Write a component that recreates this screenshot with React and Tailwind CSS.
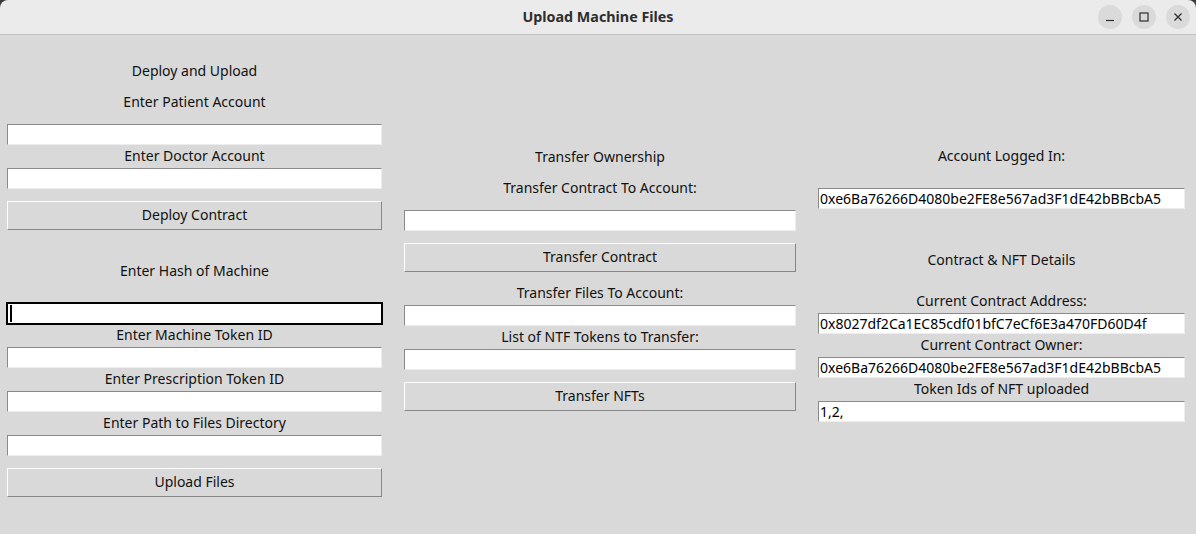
import React from "react";

const font = { fontFamily: '"Noto Sans", "DejaVu Sans", sans-serif' };

function Label({ children, className = "" }) {
  return (
    <div className={`h-[20px] text-center text-[14px] leading-[20px] text-[#111] ${className}`}>
      {children}
    </div>
  );
}

function Entry({ value = "", className = "" }) {
  return (
    <div
      className={`h-[21px] border border-t-[#8a8a8a] border-l-[#8a8a8a] border-r-[#ededed] border-b-[#ededed] bg-white px-[1px] text-[14px] leading-[19px] text-black whitespace-nowrap overflow-hidden ${className}`}
    >
      {value}
    </div>
  );
}

function FocusEntry({ className = "" }) {
  return (
    <div className={`-mx-px h-[23px] border-2 border-black bg-white p-[1px] ${className}`}>
      <div className="ml-[1px] h-full w-[2px] bg-black" />
    </div>
  );
}

function Button({ children, className = "" }) {
  return (
    <div
      className={`flex h-[29px] items-center justify-center border border-t-white border-l-white border-r-[#868686] border-b-[#868686] bg-[#d9d9d9] pb-[2px] text-[14px] text-[#111] ${className}`}
    >
      {children}
    </div>
  );
}

function TitleBar() {
  return (
    <div className="relative flex h-[35px] items-center justify-center rounded-t-[8px] border-b border-[#c2c2c2] bg-[#ebebeb]">
      <span className="text-[14.3px] font-bold text-[#2e2e2e]">Upload Machine Files</span>
      <div className="absolute right-[6px] top-[5px] flex gap-[10px]">
        <div className="flex h-[24px] w-[24px] items-center justify-center rounded-full bg-[#dadada]">
          <svg width="10" height="10" viewBox="0 0 10 10">
            <line x1="1" y1="8.5" x2="9" y2="8.5" stroke="#2e2e2e" strokeWidth="1.2" />
          </svg>
        </div>
        <div className="flex h-[24px] w-[24px] items-center justify-center rounded-full bg-[#dadada]">
          <svg width="10" height="10" viewBox="0 0 10 10">
            <rect x="1" y="1" width="8" height="8" fill="none" stroke="#2e2e2e" strokeWidth="1.2" />
          </svg>
        </div>
        <div className="flex h-[24px] w-[24px] items-center justify-center rounded-full bg-[#dadada]">
          <svg width="10" height="10" viewBox="0 0 10 10">
            <path d="M1.5 1.5 L8.5 8.5 M8.5 1.5 L1.5 8.5" stroke="#2e2e2e" strokeWidth="1.3" />
          </svg>
        </div>
      </div>
    </div>
  );
}

export default function App() {
  const account = "0xe6Ba76266D4080be2FE8e567ad3F1dE42bBBcbA5";

  return (
    <div className="h-[534px] w-[1196px] overflow-hidden bg-[#3a3a3a]" style={font}>
      <TitleBar />
      <div className="flex h-[499px] bg-[#d9d9d9] pl-[7px]">
        {/* deploy + upload */}
        <div className="flex w-[375px] flex-col">
          <Label className="mt-[26px]">Deploy and Upload</Label>
          <Label className="mt-[11px]">Enter Patient Account</Label>
          <Entry className="mt-[12px]" />
          <Label className="mt-[1px]">Enter Doctor Account</Label>
          <Entry className="mt-[2px]" />
          <Button className="mt-[12px]">Deploy Contract</Button>
          <Label className="mt-[31px]">Enter Hash of Machine</Label>
          <FocusEntry className="mt-[21px]" />
          <Label>Enter Machine Token ID</Label>
          <Entry className="mt-[2px]" />
          <Label className="mt-[1px]">Enter Prescription Token ID</Label>
          <Entry className="mt-[2px]" />
          <Label className="mt-[1px]">Enter Path to Files Directory</Label>
          <Entry className="mt-[2px]" />
          <Button className="mt-[12px]">Upload Files</Button>
        </div>

        {/* transfer */}
        <div className="ml-[22px] flex w-[392px] flex-col">
          <Label className="mt-[112px]">Transfer Ownership</Label>
          <Label className="mt-[11px]">Transfer Contract To Account:</Label>
          <Entry className="mt-[12px]" />
          <Button className="mt-[12px]">Transfer Contract</Button>
          <Label className="mt-[11px]">Transfer Files To Account:</Label>
          <Entry className="mt-[2px]" />
          <Label className="mt-[1px]">List of NTF Tokens to Transfer:</Label>
          <Entry className="mt-[2px]" />
          <Button className="mt-[12px]">Transfer NFTs</Button>
        </div>

        {/* details */}
        <div className="ml-[22px] flex w-[367px] flex-col">
          <Label className="mt-[111px]">Account Logged In:</Label>
          <Entry className="mt-[22px]" value={account} />
          <Label className="mt-[41px]">Contract &amp; NFT Details</Label>
          <Label className="mt-[21px]">Current Contract Address:</Label>
          <Entry className="mt-[2px]" value="0x8027df2Ca1EC85cdf01bfC7eCf6E3a470FD60D4f" />
          <Label className="mt-[1px]">Current Contract Owner:</Label>
          <Entry className="mt-[2px]" value={account} />
          <Label className="mt-[1px]">Token Ids of NFT uploaded</Label>
          <Entry className="mt-[2px]" value="1,2," />
        </div>
      </div>
    </div>
  );
}
